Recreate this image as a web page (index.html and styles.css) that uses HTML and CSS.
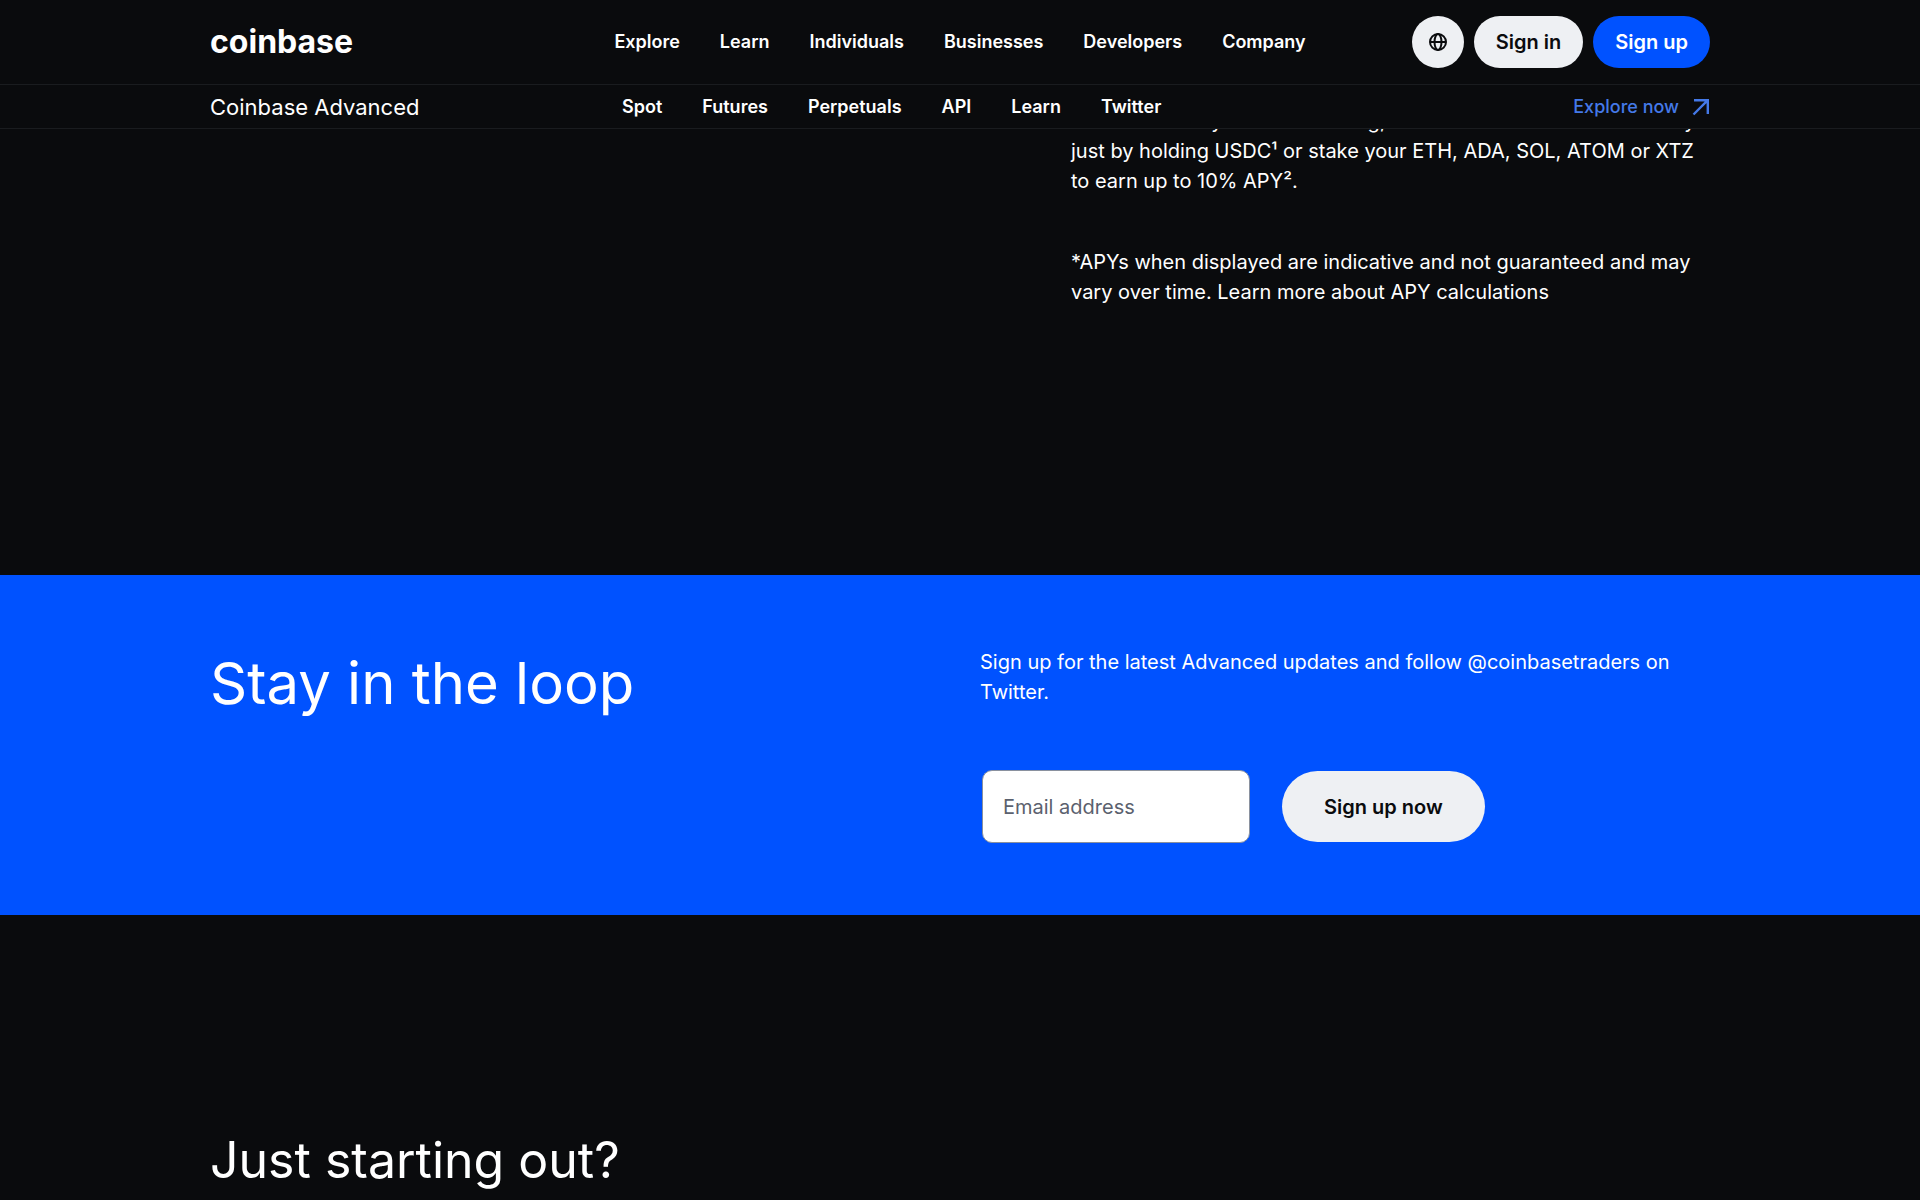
FILE: index.html
```html
<!DOCTYPE html>
<html lang="en">
<head>
  <meta charset="utf-8">
  <meta name="viewport" content="width=device-width, initial-scale=1">
  <title>Coinbase Advanced</title>
  <link rel="stylesheet" href="styles.css">
</head>
<body>
  <header class="site-header">
    <div class="container top-bar">
      <a class="logo" href="#">coinbase</a>
      <nav class="main-nav" aria-label="Main">
        <a href="#">Explore</a>
        <a href="#">Learn</a>
        <a href="#">Individuals</a>
        <a href="#">Businesses</a>
        <a href="#">Developers</a>
        <a href="#">Company</a>
      </nav>
      <div class="actions">
        <button class="pill pill-icon" type="button" aria-label="Language and region">
          <svg width="20" height="20" viewBox="0 0 20 20" fill="none" stroke="currentColor" stroke-width="2" aria-hidden="true">
            <circle cx="10" cy="10" r="8"/>
            <ellipse cx="10" cy="10" rx="3.5" ry="8"/>
            <path d="M2 10h16"/>
          </svg>
        </button>
        <button class="pill pill-light" type="button">Sign in</button>
        <button class="pill pill-primary" type="button">Sign up</button>
      </div>
    </div>
    <div class="sub-bar">
      <div class="container sub-bar-inner">
        <a class="product" href="#">Coinbase Advanced</a>
        <nav class="sub-nav" aria-label="Coinbase Advanced">
          <a href="#">Spot</a>
          <a href="#">Futures</a>
          <a href="#">Perpetuals</a>
          <a href="#">API</a>
          <a href="#">Learn</a>
          <a href="#">Twitter</a>
        </nav>
        <a class="explore-now" href="#">Explore now
          <svg width="18" height="18" viewBox="0 0 18 18" fill="none" stroke="currentColor" stroke-width="2.4" aria-hidden="true">
            <path d="M2 2.2h13.8V16M15.8 2.2 1.5 16.5"/>
          </svg>
        </a>
      </div>
    </div>
  </header>

  <main>
    <section class="rewards">
      <div class="container rewards-grid">
        <div class="rewards-copy">
          <p>Even on the days with no trading, earn new rewards in USDC daily<br>just by holding USDC¹ or stake your ETH, ADA, SOL, ATOM or XTZ<br>to earn up to 10% APY².</p>
          <p>*APYs when displayed are indicative and not guaranteed and may<br>vary over time. Learn more about APY calculations</p>
        </div>
      </div>
    </section>

    <section class="newsletter">
      <div class="container newsletter-grid">
        <h2 class="title-large">Stay in the loop</h2>
        <div class="newsletter-body">
          <p>Sign up for the latest Advanced updates and follow @coinbasetraders on Twitter.</p>
          <form class="signup">
            <input class="email" type="email" placeholder="Email address" aria-label="Email address">
            <button class="signup-button" type="submit">Sign up now</button>
          </form>
        </div>
      </div>
    </section>

    <section class="starting">
      <div class="container">
        <h2 class="title-medium">Just starting out?</h2>
      </div>
    </section>
  </main>
</body>
</html>
```
FILE: styles.css
```css
* {
  box-sizing: border-box;
}

body {
  margin: 0;
  background: #0a0b0d;
  color: #fff;
  font-family: Inter, "Liberation Sans", sans-serif;
  font-size: 20px;
  line-height: 30px;
}

a {
  color: inherit;
  text-decoration: none;
}

h2,
p {
  margin: 0;
}

button,
input {
  font: inherit;
}

svg {
  display: block;
}

.container {
  width: 100%;
  max-width: 1548px;
  margin: 0 auto;
  padding: 0 24px;
}

/* Header */

.site-header {
  position: fixed;
  top: 0;
  left: 0;
  right: 0;
  z-index: 10;
  background: #0a0b0d;
  border-bottom: 1px solid #1a1c1f;
}

.top-bar,
.sub-bar-inner {
  display: grid;
  align-items: center;
}

.top-bar {
  grid-template-columns: 1fr auto 1fr;
  height: 84px;
}

.logo {
  font-size: 32px;
  font-weight: 700;
}

.main-nav,
.sub-nav {
  display: flex;
  gap: 40px;
  font-size: 18px;
  font-weight: 600;
}

.actions {
  display: flex;
  justify-content: flex-end;
  gap: 10px;
}

.pill {
  height: 52px;
  padding: 0 22px;
  border: 0;
  border-radius: 26px;
  font-weight: 600;
}

.pill-icon {
  display: grid;
  place-items: center;
  width: 52px;
  padding: 0;
}

.pill-icon,
.pill-light,
.signup-button {
  background: #eef0f3;
  color: #0a0b0d;
}

.pill-primary {
  background: #0052ff;
  color: #fff;
}

.sub-bar {
  border-top: 1px solid #1a1c1f;
}

.sub-bar-inner {
  grid-template-columns: 412px 1fr auto;
  height: 43px;
}

.product {
  font-size: 22px;
}

.explore-now {
  display: flex;
  align-items: center;
  gap: 13px;
  color: #4479e8;
  font-size: 18px;
  font-weight: 500;
}

/* Rewards */

.rewards {
  padding: 106px 0 268px;
}

.rewards-grid {
  display: grid;
  grid-template-columns: 861fr 639fr;
}

.rewards-copy {
  display: grid;
  grid-column: 2;
  gap: 51px;
  min-width: 0;
  white-space: nowrap;
}

/* Newsletter */

.newsletter {
  padding: 72px 0;
  background: #0052ff;
}

.newsletter-grid {
  display: grid;
  grid-template-columns: 770fr 730fr;
}

.title-large {
  font-size: 58px;
  font-weight: 400;
  line-height: 72px;
}

.signup {
  display: flex;
  align-items: center;
  gap: 32px;
  margin-top: 63px;
  padding-left: 2px;
}

.email {
  width: 268px;
  height: 73px;
  padding: 0 20px;
  border: 1px solid #8a919e;
  border-radius: 10px;
  background: #fff;
  color: #0a0b0d;
}

.email::placeholder {
  color: #5b616e;
  opacity: 1;
}

.signup-button {
  height: 71px;
  padding: 0 42px;
  border: 0;
  border-radius: 36px;
  font-weight: 600;
}

/* Getting started */

.starting {
  padding: 213px 0 8px;
}

.title-medium {
  font-size: 50px;
  font-weight: 400;
  line-height: 64px;
}
```
